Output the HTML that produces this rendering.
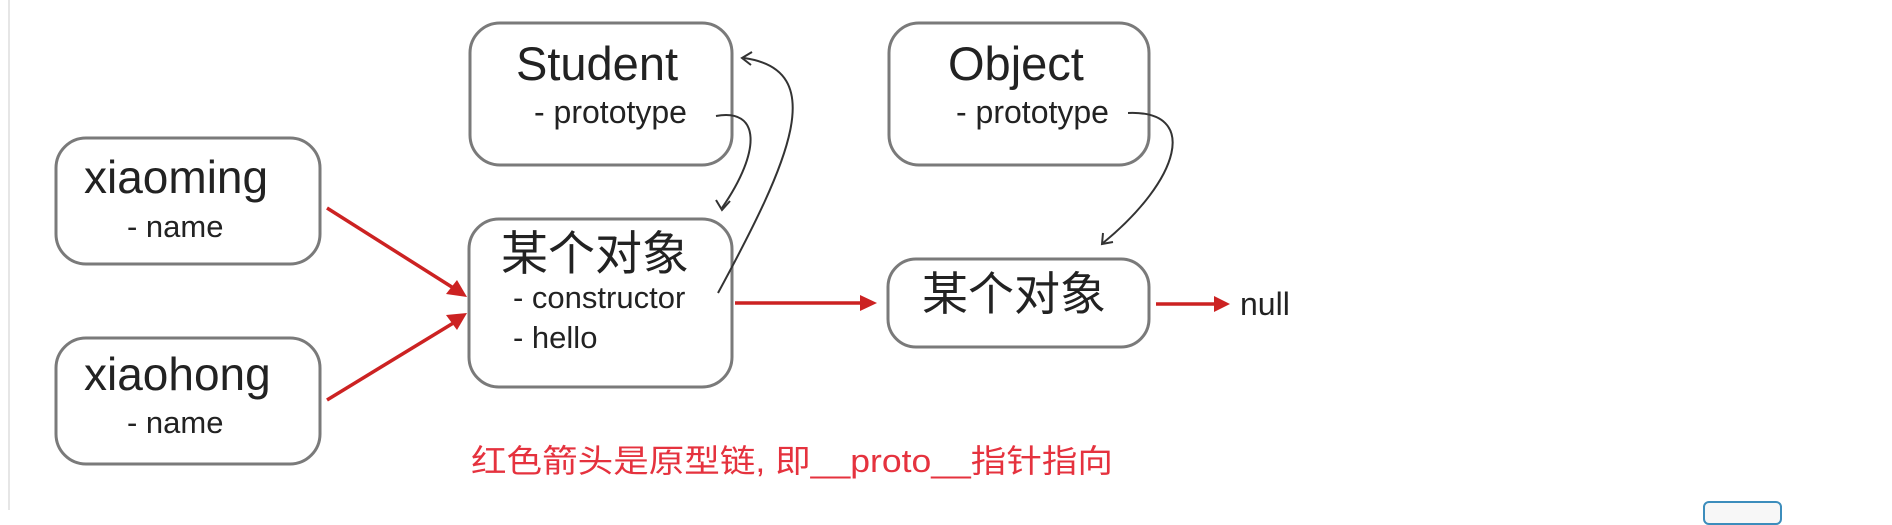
<!DOCTYPE html>
<html><head><meta charset="utf-8"><style>
body{margin:0;width:1892px;height:510px;background:#fff;overflow:hidden;position:relative;font-family:"Liberation Sans","Noto Sans CJK SC",sans-serif;}
.vl{position:absolute;left:8px;top:0;width:2px;height:510px;background:#e6e6e6}
.btn{position:absolute;left:1703px;top:501px;width:75px;height:20px;border:2px solid #3c8dbc;border-radius:6px;background:#f7f7f7}
</style></head><body>
<div class="vl"></div>
<svg width="1892" height="510" style="position:absolute;left:0;top:0" font-family="Liberation Sans, Noto Sans CJK SC, sans-serif">
<g fill="none" stroke="#7a7a7a" stroke-width="3">
<rect x="56" y="138" width="264" height="126" rx="30"/>
<rect x="56" y="338" width="264" height="126" rx="30"/>
<rect x="470" y="23" width="262" height="142" rx="30"/>
<rect x="889" y="23" width="260" height="142" rx="30"/>
<rect x="469" y="219" width="263" height="168" rx="30"/>
<rect x="888" y="259" width="261" height="88" rx="28"/>
</g>
<g fill="#222">
<text x="84" y="193" font-size="46">xiaoming</text>
<text x="127" y="237" font-size="31">- name</text>
<text x="84" y="390" font-size="46">xiaohong</text>
<text x="127" y="433" font-size="31">- name</text>
<text x="516" y="80" font-size="47">Student</text>
<text x="534" y="123" font-size="32">- prototype</text>
<text x="948" y="80" font-size="47">Object</text>
<text x="956" y="123" font-size="32">- prototype</text>
<text x="501" y="270" font-size="47">某个对象</text>
<text x="513" y="308" font-size="31">- constructor</text>
<text x="513" y="348" font-size="31">- hello</text>
<text x="922" y="310" font-size="46">某个对象</text>
<text x="1240" y="315" font-size="32">null</text>
</g>
<g stroke="#c22" stroke-width="3.5" fill="none">
<line x1="327" y1="208" x2="455" y2="289"/>
<line x1="327" y1="400" x2="455" y2="322"/>
<line x1="735" y1="303" x2="862" y2="303"/>
<line x1="1156" y1="304" x2="1216" y2="304"/>
</g>
<g fill="#c22">
<polygon points="467,297 446,294 457,280"/>
<polygon points="467,313 446,315 457,330"/>
<polygon points="877,303 860,295 860,311"/>
<polygon points="1230,304 1214,296 1214,312"/>
</g>
<g stroke="#333" stroke-width="2" fill="none">
<path d="M716,116 C760,108 762,150 722,208"/>
<path d="M716,200 L722,210 L730,201"/>
<path d="M718,293 C790,160 830,70 744,58"/>
<path d="M752,52 L742,58 L751,65"/>
<path d="M1128,113 C1200,110 1180,180 1103,243"/>
<path d="M1103,233 L1102,244 L1113,242"/>
</g>
<text x="471" y="472" font-size="32" fill="#e5323e" textLength="642" lengthAdjust="spacingAndGlyphs">红色箭头是原型链, 即__proto__指针指向</text>
</svg>
<div class="btn"></div>
</body></html>
